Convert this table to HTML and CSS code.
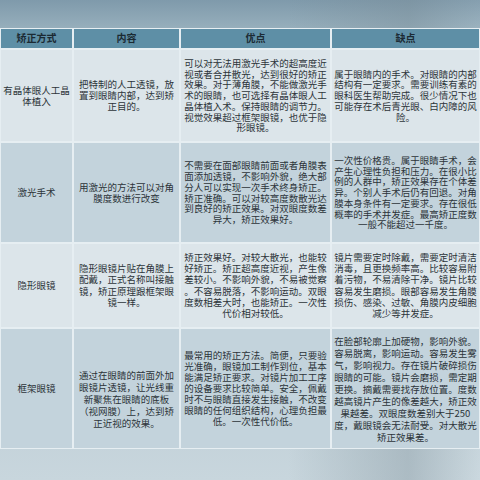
FILE: index.html
```html
<!DOCTYPE html>
<html lang="zh">
<head>
<meta charset="utf-8">
<link rel="stylesheet" href="styles.css">
</head>
<body>
<div class="page">
  <div class="grid">
    <div class="cell head">矫正方式</div>
    <div class="cell head">内容</div>
    <div class="cell head">优点</div>
    <div class="cell head">缺点</div>

    <div class="cell r1 label">有晶体眼人工晶<br>体植入</div>
    <div class="cell r1">把特制的人工透镜，放<br>置到眼睛内部，达到矫<br>正目的。</div>
    <div class="cell r1">可以对无法用激光手术的超高度近<br>视或者合并散光，达到很好的矫正<br>效果。对于薄角膜，不能做激光手<br>术的眼睛，也可选择有晶体眼人工<br>晶体植入术。保持眼睛的调节力。<br>视觉效果超过框架眼镜，也优于隐<br>形眼镜。</div>
    <div class="cell r1">属于眼睛内的手术。对眼睛的内部<br>结构有一定要求。需要训练有素的<br>眼科医生帮助完成。很少情况下也<br>可能存在术后青光眼、白内障的风<br>险。</div>

    <div class="cell r2 label">激光手术</div>
    <div class="cell r2">用激光的方法可以对角<br>膜度数进行改变</div>
    <div class="cell r2">不需要在面部眼睛前面或者角膜表<br>面添加透镜，不影响外貌，绝大部<br>分人可以实现一次手术终身矫正。<br>矫正准确。可以对较高度数散光达<br>到良好的矫正效果。对双眼度数差<br>异大，矫正效果好。</div>
    <div class="cell r2">一次性价格贵。属于眼睛手术，会<br>产生心理性负担和压力。在很小比<br>例的人群中，矫正效果存在个体差<br>异。个别人手术后仍有回退。对角<br>膜本身条件有一定要求。存在很低<br>概率的手术并发症。最高矫正度数<br>一般不能超过一千度。</div>

    <div class="cell r3 label">隐形眼镜</div>
    <div class="cell r3">隐形眼镜片贴在角膜上<br>配戴，正式名称叫接触<br>镜，矫正原理跟框架眼<br>镜一样。</div>
    <div class="cell r3">矫正效果好。对较大散光，也能较<br>好矫正。矫正超高度近视，产生像<br>差较小。不影响外貌，不易被觉察<br>。不容易脱落，不影响运动。双眼<br>度数相差大时，也能矫正。一次性<br>代价相对较低。</div>
    <div class="cell r3">镜片需要定时除戴，需要定时清洁<br>消毒，且更换频率高。比较容易附<br>着污物，不易清除干净。镜片比较<br>容易发生磨损。眼部容易发生角膜<br>损伤、感染、过敏、角膜内皮细胞<br>减少等并发症。</div>

    <div class="cell r4 label">框架眼镜</div>
    <div class="cell r4 tall low">通过在眼睛的前面外加<br>眼镜片透镜，让光线重<br>新聚焦在眼睛的底板<br>（视网膜）上，达到矫<br>正近视的效果。</div>
    <div class="cell r4 mid">最常用的矫正方法。简便，只要验<br>光准确，眼镜加工制作到位，基本<br>能满足矫正要求。对镜片加工工序<br>的设备要求比较简单。安全，佩戴<br>时不与眼睛直接发生接触，不改变<br>眼睛的任何组织结构，心理负担最<br>低。一次性代价低。</div>
    <div class="cell r4 tall">在脸部轮廓上加硬物，影响外貌。<br>容易脱离，影响运动。容易发生雾<br>气，影响视力。存在镜片破碎损伤<br>眼睛的可能。镜片会磨损，需定期<br>更换。摘戴需要找存放位置。度数<br>越高镜片产生的像差越大，矫正效<br>果越差。双眼度数差别大于250<br>度，戴眼镜会无法耐受。对大散光<br>矫正效果差。</div>
  </div>
</div>
</body>
</html>
```

FILE: styles.css
```css
html, body {
  margin: 0;
  padding: 0;
}
body {
  width: 480px;
  height: 480px;
  overflow: hidden;
  font-family: "Noto Sans CJK SC", "Noto Sans", sans-serif;
}
.page {
  width: 480px;
  height: 480px;
  padding-top: 28px;
  box-sizing: border-box;
  background:
    linear-gradient(90deg, rgba(255,255,255,0) 0%, rgba(255,255,255,0) 60%, rgba(120,138,148,0.35) 85%, rgba(255,255,255,0.05) 100%) ,
    linear-gradient(180deg, #7f9aab 0%, #98b0bd 30px, #b7c8d1 60%, #c8d6dd 100%);
}
.grid {
  display: grid;
  grid-template-columns: 71px 105px 149px 147px;
  grid-template-rows: 19px 91px 99px 83px 119px;
  gap: 2px;
  padding: 1px;
  background: #e6eef2;
}
.cell {
  display: flex;
  align-items: center;
  justify-content: center;
  text-align: center;
  white-space: nowrap;
  font-size: 9.5px;
  line-height: 10.8px;
  color: #2c3439;
  letter-spacing: 0;
}
.head {
  background: #5e8fa6;
  font-weight: bold;
  font-size: 10px;
  color: #1b2a33;
}
.r1, .r3 {
  background: #dce5ea;
}
.r2, .r4 {
  background: #c3d3dc;
}
.label {
  line-height: 11px;
}
.r3 {
  line-height: 11.2px;
}
.mid {
  line-height: 11.1px;
}
.tall {
  line-height: 12px;
}
.low {
  padding-top: 20px;
  box-sizing: border-box;
}
```
